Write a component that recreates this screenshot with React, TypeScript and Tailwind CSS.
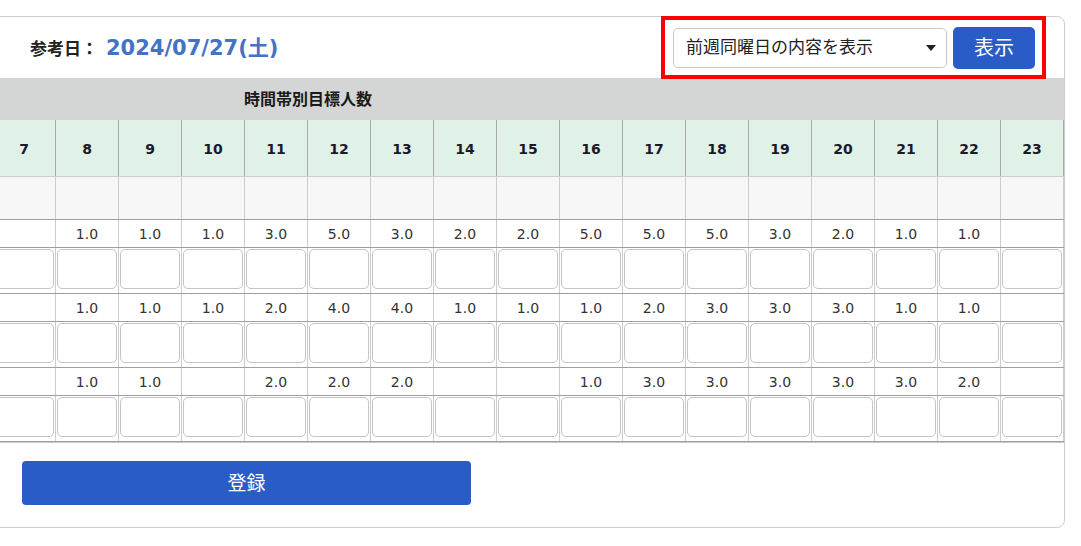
import React from 'react';

const HOURS = Array.from({ length: 24 }, (_, i) => i);

// 0〜7時は横スクロールで隠れている範囲（値なし）
const pad = (vals: (number | null)[]) => [...Array(8).fill(null), ...vals, null] as (number | null)[];

const TARGET_ROWS: (number | null)[][] = [
  pad([1, 1, 1, 3, 5, 3, 2, 2, 5, 5, 5, 3, 2, 1, 1]),
  pad([1, 1, 1, 2, 4, 4, 1, 1, 1, 2, 3, 3, 3, 1, 1]),
  pad([1, 1, null, 2, 2, 2, null, null, 1, 3, 3, 3, 3, 3, 2]),
];

const FONT = { fontFamily: '"DejaVu Sans", "Noto Sans CJK JP", sans-serif' };

const App: React.FC = () => {
  return (
    <div className="relative w-[1081px] h-[546px] overflow-hidden bg-white pt-4" style={FONT}>
      <div className="-ml-[10px] w-[1075px] overflow-hidden rounded-lg border border-[#cccccc] bg-white">
        {/* Header: reference date + copy selector */}
        <div className="flex h-[61px] items-center justify-between pl-[39px] pr-[29px]">
          <div className="flex items-baseline pt-[2px]">
            <span className="text-[17px] font-bold text-[#222]">参考日：</span>
            <span className="ml-[8px] text-[21px] font-bold text-[#4472c4]">2024/07/27(土)</span>
          </div>
          <div className="flex items-center gap-[6px]">
            <div className="flex h-[40px] w-[274px] items-center justify-between rounded-[5px] border border-[#c8c8c8] bg-white pl-[12px] pr-[10px]">
              <span className="text-[17px] text-[#222]">前週同曜日の内容を表示</span>
              <svg width="10" height="6" viewBox="0 0 10 6">
                <path d="M0 0 L10 0 L5 6 Z" fill="#222" />
              </svg>
            </div>
            <button className="h-[42px] w-[82px] rounded-[5px] bg-[#2a5cc8] text-[20px] text-white">表示</button>
          </div>
        </div>

        {/* Hourly target table (scrolled horizontally) */}
        <div className="overflow-hidden border-b border-[#cccccc]">
          <div className="-ml-[439px] w-[1512px]">
            <div className="flex h-[42px] items-center justify-center bg-[#d4d5d5] pt-[1px] text-[16px] font-bold text-[#1a1a1a]">
              時間帯別目標人数
            </div>
            <div className="flex h-[57px] border-b border-[#cccccc] bg-[#e0f1e8]">
              {HOURS.map((h) => (
                <div
                  key={h}
                  className="flex w-[63px] items-center justify-center border-r border-[#aaaaaa] pt-[3px] text-[14px] font-bold text-[#1a1a2a]"
                >
                  {h}
                </div>
              ))}
            </div>
            <div className="flex h-[43px] border-b border-[#9f9f9f] bg-[#f7f7f7]">
              {HOURS.map((h) => (
                <div key={h} className="w-[63px] border-r border-[#cccccc]" />
              ))}
            </div>
            {TARGET_ROWS.map((vals, r) => (
              <React.Fragment key={r}>
                <div className="flex h-[28px] border-b border-[#9f9f9f]">
                  {vals.map((v, i) => (
                    <div
                      key={i}
                      className="flex w-[63px] items-center justify-center border-r border-[#cccccc] pt-[2px] text-[14px] text-[#333]"
                    >
                      {v !== null ? v.toFixed(1) : ''}
                    </div>
                  ))}
                </div>
                <div className="flex h-[46px] border-b border-[#9f9f9f]">
                  {HOURS.map((h) => (
                    <div key={h} className="w-[63px] border-r border-[#cccccc] px-[1px] pt-[1px]">
                      <input className="h-[40px] w-full rounded-[5px] border border-[#c4c4c4] bg-white" />
                    </div>
                  ))}
                </div>
              </React.Fragment>
            ))}
          </div>
        </div>

        {/* Footer */}
        <div className="pb-[22px] pl-[31px] pt-[18px]">
          <button className="h-[44px] w-[449px] rounded-[4px] bg-[#2a5cc8] text-[19px] text-white">登録</button>
        </div>
      </div>

      {/* Annotation highlight */}
      <div className="absolute left-[661px] top-[16px] h-[63px] w-[385px] border-4 border-[#ff0000]" />
    </div>
  );
};

export default App;
